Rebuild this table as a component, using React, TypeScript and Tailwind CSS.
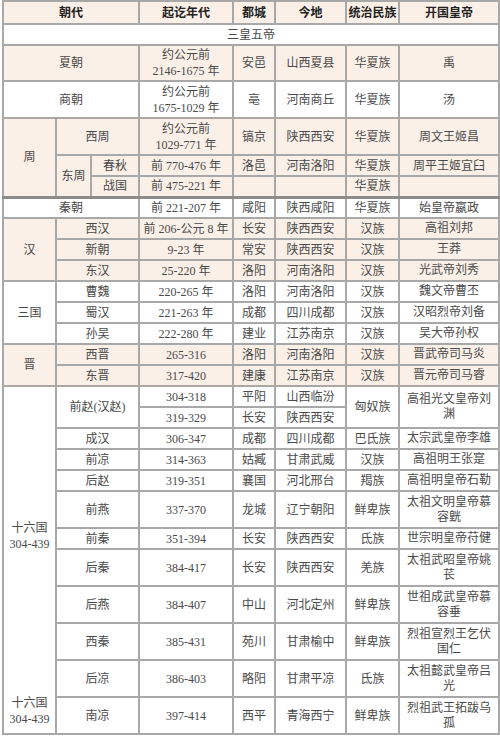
import type { ReactNode } from 'react'

const BEIGE = 'bg-[#faf0e7]'

function Td({
  children,
  colSpan,
  rowSpan,
  wrap,
  className = '',
}: {
  children?: ReactNode
  colSpan?: number
  rowSpan?: number
  wrap?: boolean
  className?: string
}) {
  const fit = wrap ? 'whitespace-normal px-[5px] leading-[15px]' : 'whitespace-nowrap px-0 leading-[16px]'
  return (
    <td
      colSpan={colSpan}
      rowSpan={rowSpan}
      className={`border-2 border-[#a8a8a8] py-0 text-center align-middle ${fit} ${className}`}
    >
      {children}
    </td>
  )
}

// plain rows: [name, years, capital, place, people, founder]
type Row = [string, string, string, string, string, string]

function Cells({ r }: { r: Row }) {
  return (
    <>
      <Td colSpan={2}>{r[0]}</Td>
      <Td>{r[1]}</Td>
      <Td>{r[2]}</Td>
      <Td>{r[3]}</Td>
      <Td>{r[4]}</Td>
      <Td wrap>{r[5]}</Td>
    </>
  )
}

const han: Row[] = [
  ['西汉', '前 206-公元 8 年', '长安', '陕西西安', '汉族', '高祖刘邦'],
  ['新朝', '9-23 年', '常安', '陕西西安', '汉族', '王莽'],
  ['东汉', '25-220 年', '洛阳', '河南洛阳', '汉族', '光武帝刘秀'],
]

const sanguo: Row[] = [
  ['曹魏', '220-265 年', '洛阳', '河南洛阳', '汉族', '魏文帝曹丕'],
  ['蜀汉', '221-263 年', '成都', '四川成都', '汉族', '汉昭烈帝刘备'],
  ['孙吴', '222-280 年', '建业', '江苏南京', '汉族', '吴大帝孙权'],
]

const jin: Row[] = [
  ['西晋', '265-316', '洛阳', '河南洛阳', '汉族', '晋武帝司马炎'],
  ['东晋', '317-420', '建康', '江苏南京', '汉族', '晋元帝司马睿'],
]

// 十六国 after 前赵; second flag = two-line row
const shiliu: [Row, boolean][] = [
  [['成汉', '306-347', '成都', '四川成都', '巴氐族', '太宗武皇帝李雄'], false],
  [['前凉', '314-363', '姑臧', '甘肃武威', '汉族', '高祖明王张寔'], false],
  [['后赵', '319-351', '襄国', '河北邢台', '羯族', '高祖明皇帝石勒'], false],
  [['前燕', '337-370', '龙城', '辽宁朝阳', '鲜卑族', '太祖文明皇帝慕容皝'], true],
  [['前秦', '351-394', '长安', '陕西西安', '氐族', '世宗明皇帝苻健'], false],
  [['后秦', '384-417', '长安', '陕西西安', '羌族', '太祖武昭皇帝姚苌'], true],
  [['后燕', '384-407', '中山', '河北定州', '鲜卑族', '世祖成武皇帝慕容垂'], true],
  [['西秦', '385-431', '苑川', '甘肃榆中', '鲜卑族', '烈祖宣烈王乞伏国仁'], true],
  [['后凉', '386-403', '略阳', '甘肃平凉', '氐族', '太祖懿武皇帝吕光'], true],
  [['南凉', '397-414', '西平', '青海西宁', '鲜卑族', '烈祖武王拓跋乌孤'], true],
]

export default function App() {
  return (
    <div className="min-h-[736px] bg-white pl-[2px] font-['Liberation_Serif','Noto_Sans_CJK_SC',serif] text-[12px] text-[#4a4a4a]">
      <table className="w-[496px] table-fixed border-collapse">
        <colgroup>
          <col className="w-[53px]" />
          <col className="w-[35px]" />
          <col className="w-[48px]" />
          <col className="w-[94px]" />
          <col className="w-[42px]" />
          <col className="w-[71px]" />
          <col className="w-[53px]" />
          <col className="w-[100px]" />
        </colgroup>
        <tbody>
          {/* Header */}
          <tr className={`h-[23px] ${BEIGE} font-bold text-[#222]`}>
            <Td colSpan={3}>朝代</Td>
            <Td>起讫年代</Td>
            <Td>都城</Td>
            <Td>今地</Td>
            <Td>统治民族</Td>
            <Td>开国皇帝</Td>
          </tr>

          <tr className="h-[21px] bg-white">
            <Td colSpan={8}>三皇五帝</Td>
          </tr>

          <tr className={`h-[36px] ${BEIGE}`}>
            <Td colSpan={3}>夏朝</Td>
            <Td>约公元前<br />2146-1675 年</Td>
            <Td>安邑</Td>
            <Td>山西夏县</Td>
            <Td>华夏族</Td>
            <Td>禹</Td>
          </tr>

          <tr className="h-[37px] bg-white">
            <Td colSpan={3}>商朝</Td>
            <Td>约公元前<br />1675-1029 年</Td>
            <Td>亳</Td>
            <Td>河南商丘</Td>
            <Td>华夏族</Td>
            <Td>汤</Td>
          </tr>

          {/* 周 */}
          <tr className={`h-[37px] ${BEIGE}`}>
            <Td rowSpan={3} className="border-b-[3px] border-b-[#8c8c8c]">周</Td>
            <Td colSpan={2}>西周</Td>
            <Td>约公元前<br />1029-771 年</Td>
            <Td>镐京</Td>
            <Td>陕西西安</Td>
            <Td>华夏族</Td>
            <Td>周文王姬昌</Td>
          </tr>
          <tr className={`h-[21px] ${BEIGE}`}>
            <Td rowSpan={2} className="border-b-[3px] border-b-[#8c8c8c]">东周</Td>
            <Td>春秋</Td>
            <Td>前 770-476 年</Td>
            <Td>洛邑</Td>
            <Td>河南洛阳</Td>
            <Td>华夏族</Td>
            <Td>周平王姬宜臼</Td>
          </tr>
          <tr className={`h-[21px] ${BEIGE} [&>td]:border-b-[3px] [&>td]:border-b-[#8c8c8c]`}>
            <Td>战国</Td>
            <Td>前 475-221 年</Td>
            <Td />
            <Td />
            <Td>华夏族</Td>
            <Td />
          </tr>

          <tr className="h-[21px] bg-white">
            <Td colSpan={3}>秦朝</Td>
            <Td>前 221-207 年</Td>
            <Td>咸阳</Td>
            <Td>陕西咸阳</Td>
            <Td>华夏族</Td>
            <Td>始皇帝嬴政</Td>
          </tr>

          {/* 汉 */}
          {han.map((r, i) => (
            <tr key={r[0]} className={`h-[21px] ${BEIGE}`}>
              {i === 0 && <Td rowSpan={3}>汉</Td>}
              <Cells r={r} />
            </tr>
          ))}

          {/* 三国 */}
          {sanguo.map((r, i) => (
            <tr key={r[0]} className="h-[21px] bg-white">
              {i === 0 && <Td rowSpan={3}>三国</Td>}
              <Cells r={r} />
            </tr>
          ))}

          {/* 晋 */}
          {jin.map((r, i) => (
            <tr key={r[0]} className={`h-[21px] ${BEIGE}`}>
              {i === 0 && <Td rowSpan={2}>晋</Td>}
              <Cells r={r} />
            </tr>
          ))}

          {/* 十六国 */}
          <tr className="h-[21px] bg-white">
            <Td rowSpan={12} className="align-top pt-[133px]">
              <div>十六国<br />304-439</div>
              <div className="mt-[143px]">十六国<br />304-439</div>
            </Td>
            <Td colSpan={2} rowSpan={2}>前赵(汉赵)</Td>
            <Td>304-318</Td>
            <Td>平阳</Td>
            <Td>山西临汾</Td>
            <Td rowSpan={2}>匈奴族</Td>
            <Td rowSpan={2} wrap>高祖光文皇帝刘渊</Td>
          </tr>
          <tr className="h-[21px] bg-white">
            <Td>319-329</Td>
            <Td>长安</Td>
            <Td>陕西西安</Td>
          </tr>
          {shiliu.map(([r, tall]) => (
            <tr key={r[0]} className={`${tall ? 'h-[37px]' : 'h-[21px]'} bg-white`}>
              <Cells r={r} />
            </tr>
          ))}
        </tbody>
      </table>
    </div>
  )
}
